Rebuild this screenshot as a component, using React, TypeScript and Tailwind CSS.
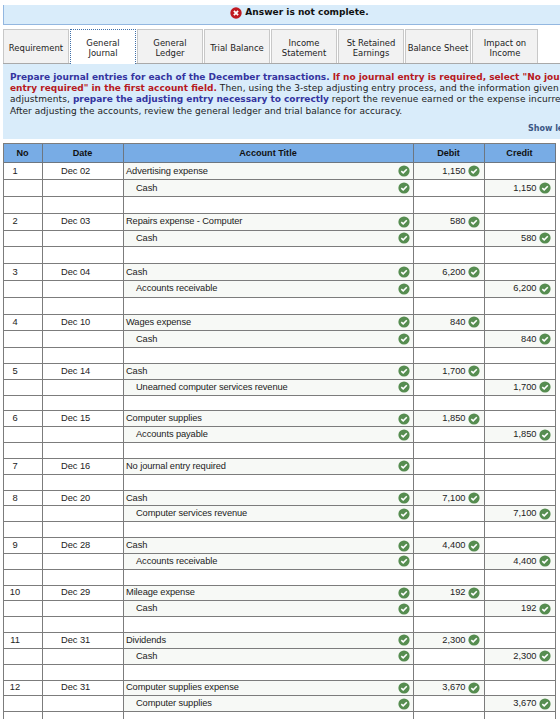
import React from "react";

type Line = { account: string; debit?: string; credit?: string };
type Entry = { no: number; date: string; lines: Line[] };

const entries: Entry[] = [
  { no: 1, date: "Dec 02", lines: [{ account: "Advertising expense", debit: "1,150" }, { account: "Cash", credit: "1,150" }] },
  { no: 2, date: "Dec 03", lines: [{ account: "Repairs expense - Computer", debit: "580" }, { account: "Cash", credit: "580" }] },
  { no: 3, date: "Dec 04", lines: [{ account: "Cash", debit: "6,200" }, { account: "Accounts receivable", credit: "6,200" }] },
  { no: 4, date: "Dec 10", lines: [{ account: "Wages expense", debit: "840" }, { account: "Cash", credit: "840" }] },
  { no: 5, date: "Dec 14", lines: [{ account: "Cash", debit: "1,700" }, { account: "Unearned computer services revenue", credit: "1,700" }] },
  { no: 6, date: "Dec 15", lines: [{ account: "Computer supplies", debit: "1,850" }, { account: "Accounts payable", credit: "1,850" }] },
  { no: 7, date: "Dec 16", lines: [{ account: "No journal entry required" }] },
  { no: 8, date: "Dec 20", lines: [{ account: "Cash", debit: "7,100" }, { account: "Computer services revenue", credit: "7,100" }] },
  { no: 9, date: "Dec 28", lines: [{ account: "Cash", debit: "4,400" }, { account: "Accounts receivable", credit: "4,400" }] },
  { no: 10, date: "Dec 29", lines: [{ account: "Mileage expense", debit: "192" }, { account: "Cash", credit: "192" }] },
  { no: 11, date: "Dec 31", lines: [{ account: "Dividends", debit: "2,300" }, { account: "Cash", credit: "2,300" }] },
  { no: 12, date: "Dec 31", lines: [{ account: "Computer supplies expense", debit: "3,670" }, { account: "Computer supplies", credit: "3,670" }] },
];

type Row = { no?: number; date?: string; account?: string; indent?: boolean; debit?: string; credit?: string };

// Each entry is followed by one blank spacer row.
const rows: Row[] = entries.flatMap((e) => [
  ...e.lines.map((l, i): Row => ({ ...l, indent: i > 0, no: i === 0 ? e.no : undefined, date: i === 0 ? e.date : undefined })),
  {},
]);

const tabs: string[][] = [
  ["Requirement"],
  ["General", "Journal"],
  ["General", "Ledger"],
  ["Trial Balance"],
  ["Income", "Statement"],
  ["St Retained", "Earnings"],
  ["Balance Sheet"],
  ["Impact on", "Income"],
];

function Check() {
  return (
    <svg className="h-[12px] w-[12px] shrink-0" viewBox="0 0 12 12">
      <circle cx="6" cy="6" r="5.6" fill="#568d50" />
      <path d="M3.3 6.1 5.2 7.8 8.8 4.3" fill="none" stroke="#fff" strokeWidth="1.6" />
    </svg>
  );
}

function Amount({ value }: { value?: string }) {
  return (
    <div className={`flex items-center justify-end gap-[2.5px] border-r border-[#7c7c7c] pr-[4px] ${value ? "bg-[#f7f9f6]" : ""}`}>
      {value && (
        <>
          <span>{value}</span>
          <Check />
        </>
      )}
    </div>
  );
}

const columns = "grid grid-cols-[39px_81px_290px_71px_71px]";

export default function App() {
  return (
    <div className="h-[719px] w-[560px] overflow-hidden bg-white pl-[3px] pt-[5px] font-['DejaVu_Sans',sans-serif] text-[#222]">
      <div className="flex h-5 items-center justify-center gap-[3px] border-b border-l border-[#93b7e0] bg-[#d9ecfa] pb-[3px] pl-[35px] text-[9.05px] font-bold text-[#111]">
        <svg className="-mt-px h-[12px] w-[12px]" viewBox="0 0 12 12">
          <circle cx="6" cy="6" r="5.7" fill="#c01920" />
          <path d="M3.9 3.9 8.1 8.1M8.1 3.9 3.9 8.1" stroke="#fff" strokeWidth="1.8" />
        </svg>
        <span>Answer is not complete.</span>
      </div>

      <div className="mt-1 flex h-[35px] gap-px border-b border-[#a9a9a9] text-center text-[8.45px] leading-[10px] whitespace-nowrap">
        {tabs.map((lines, i) => (
          <div
            key={i}
            className={
              i === 1
                ? "-mb-px flex w-[66px] shrink-0 flex-col justify-center border border-b-0 border-dotted border-[#3f6fa8] bg-white pt-px"
                : "flex w-[66px] shrink-0 flex-col justify-center border border-b-0 border-[#c8c8c8] bg-[#f2f2f2] pt-[2px]"
            }
          >
            {lines.map((line) => (
              <span key={line}>{line}</span>
            ))}
          </div>
        ))}
      </div>

      <div className="h-[75px] bg-[#d9ecfa] pl-[7px] pt-[8px] text-[9px] leading-[11.2px] whitespace-nowrap">
        <p className="font-bold tracking-[-0.01px] text-[#3434a0]">
          Prepare journal entries for each of the December transactions. <span className="text-[#b71922]">If no journal entry is required, select "No journal</span>
        </p>
        <p className="tracking-[0.085px]">
          <b className="tracking-normal text-[#b71922]">entry required" in the first account field.</b> Then, using the 3-step adjusting entry process, and the information given
        </p>
        <p className="tracking-[0.1px]">
          adjustments, <b className="tracking-[-0.02px] text-[#3434a0]">prepare the adjusting entry necessary to correctly</b> report the revenue earned or the expense incurred.
        </p>
        <p className="tracking-[0.05px]">After adjusting the accounts, review the general ledger and trial balance for accuracy.</p>
        <p className="pt-[6px] pl-[518px] text-[8px] font-bold text-[#3a5684]">Show less</p>
      </div>

      <div className="mt-1 w-[553px] border-l border-t border-[#7c7c7c] font-['Liberation_Sans',Arial,sans-serif] text-[9.3px] leading-[11px]">
        <div className={`${columns} h-[19.4px] bg-[#78ace5] text-[9.1px] font-bold text-[#111]`}>
          {["No", "Date", "Account Title", "Debit", "Credit"].map((h) => (
            <div key={h} className="flex items-center justify-center border-r border-b border-[#6d7680] pr-px">
              {h}
            </div>
          ))}
        </div>
        {rows.map((r, i) => (
          <div key={i} className={`${columns} border-b border-[#7c7c7c] ${i < 11 ? "h-[16.8px]" : "h-[15.84px]"}`}>
            <div className="flex items-center border-r border-[#7c7c7c]">
              <span className="w-[22px] text-center">{r.no}</span>
            </div>
            <div className="flex items-center border-r border-[#7c7c7c] pl-[18px] tracking-[-0.05px]">{r.date}</div>
            <div className={`flex items-center justify-between border-r border-[#7c7c7c] pr-[3.5px] tracking-[-0.1px] ${r.account ? "bg-[#f7f9f6]" : ""} ${r.indent ? "pl-[12px]" : "pl-[2px]"}`}>
              {r.account && (
                <>
                  <span>{r.account}</span>
                  <Check />
                </>
              )}
            </div>
            <Amount value={r.debit} />
            <Amount value={r.credit} />
          </div>
        ))}
      </div>
    </div>
  );
}
